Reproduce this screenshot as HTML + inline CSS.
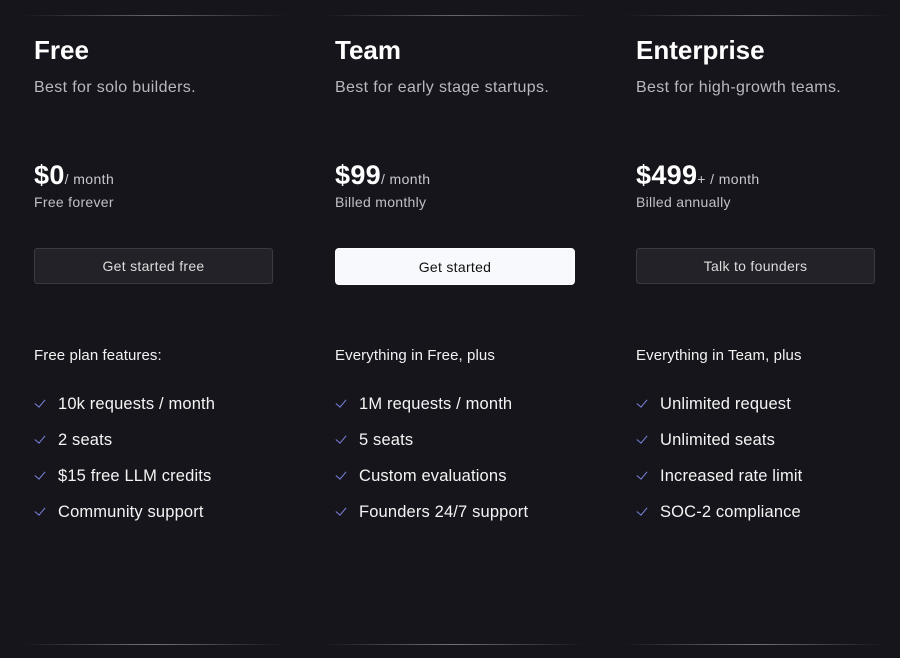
<!DOCTYPE html>
<html><head><style>
html,body{margin:0;padding:0;background:#16151b;width:900px;height:658px;overflow:hidden;font-family:"Liberation Sans",sans-serif;color:#fff}
.col{position:absolute;top:0;width:301px;height:658px}
.tl{position:absolute;left:22px;width:266px;height:1px;top:15px;background:linear-gradient(90deg,rgba(255,255,255,0),rgba(255,255,255,.35),rgba(255,255,255,0))}
.bl{position:absolute;left:22px;width:262px;height:1px;top:644px;background:linear-gradient(90deg,rgba(255,255,255,0),rgba(255,255,255,.4),rgba(255,255,255,0))}
.c{position:absolute;left:34px}
h2{position:absolute;left:34px;top:35px;margin:0;font-size:26px;font-weight:bold;letter-spacing:0}
.sub{top:79px;font-size:16px;color:#b8b8c0;letter-spacing:.35px}
.price{top:160px;font-size:27px;font-weight:bold;letter-spacing:.3px}
.price span{font-size:14px;font-weight:normal;color:#c8c8cf;letter-spacing:.4px}
.bill{top:194px;font-size:14px;color:#c0c0c8;letter-spacing:.3px}
.btn{position:absolute;left:34px;top:248px;width:239px;height:36px;border:1px solid #3a3a42;border-radius:3px;background:#222228;color:#ddd;font-size:14px;text-align:center;line-height:34px;box-sizing:border-box;letter-spacing:.3px}
.btn.w{background:#f8f9fc;color:#111;border:1px solid #fff;width:240px;height:37px;line-height:36px;border-radius:4px}
.fh{top:347px;font-size:15px;color:#f2f2f2;letter-spacing:.1px}
ul{position:absolute;left:34px;top:394px;margin:0;padding:0;list-style:none}
li{height:36px;font-size:16.5px;color:#f4f4f4;position:relative;padding-left:24px;line-height:20px;letter-spacing:.15px}
li:before{content:"";position:absolute;left:1px;top:5px;width:9px;height:5px;border-left:1.5px solid #7b83e0;border-bottom:1.5px solid #7b83e0;transform:rotate(-50deg)}
</style></head><body>
<div class="col" style="left:0">
<div class="tl"></div><div class="bl"></div>
<h2>Free</h2>
<div class="c sub">Best for solo builders.</div>
<div class="c price">$0<span>/ month</span></div>
<div class="c bill">Free forever</div>
<div class="btn">Get started free</div>
<div class="c fh">Free plan features:</div>
<ul><li>10k requests / month</li><li>2 seats</li><li>$15 free LLM credits</li><li>Community support</li></ul>
</div>
<div class="col" style="left:301px">
<div class="tl"></div><div class="bl"></div>
<h2>Team</h2>
<div class="c sub">Best for early stage startups.</div>
<div class="c price">$99<span>/ month</span></div>
<div class="c bill">Billed monthly</div>
<div class="btn w">Get started</div>
<div class="c fh">Everything in Free, plus</div>
<ul><li>1M requests / month</li><li>5 seats</li><li>Custom evaluations</li><li>Founders 24/7 support</li></ul>
</div>
<div class="col" style="left:602px">
<div class="tl"></div><div class="bl"></div>
<h2>Enterprise</h2>
<div class="c sub">Best for high-growth teams.</div>
<div class="c price">$499<span>+ / month</span></div>
<div class="c bill">Billed annually</div>
<div class="btn">Talk to founders</div>
<div class="c fh">Everything in Team, plus</div>
<ul><li>Unlimited request</li><li>Unlimited seats</li><li>Increased rate limit</li><li>SOC-2 compliance</li></ul>
</div>
</body></html>
